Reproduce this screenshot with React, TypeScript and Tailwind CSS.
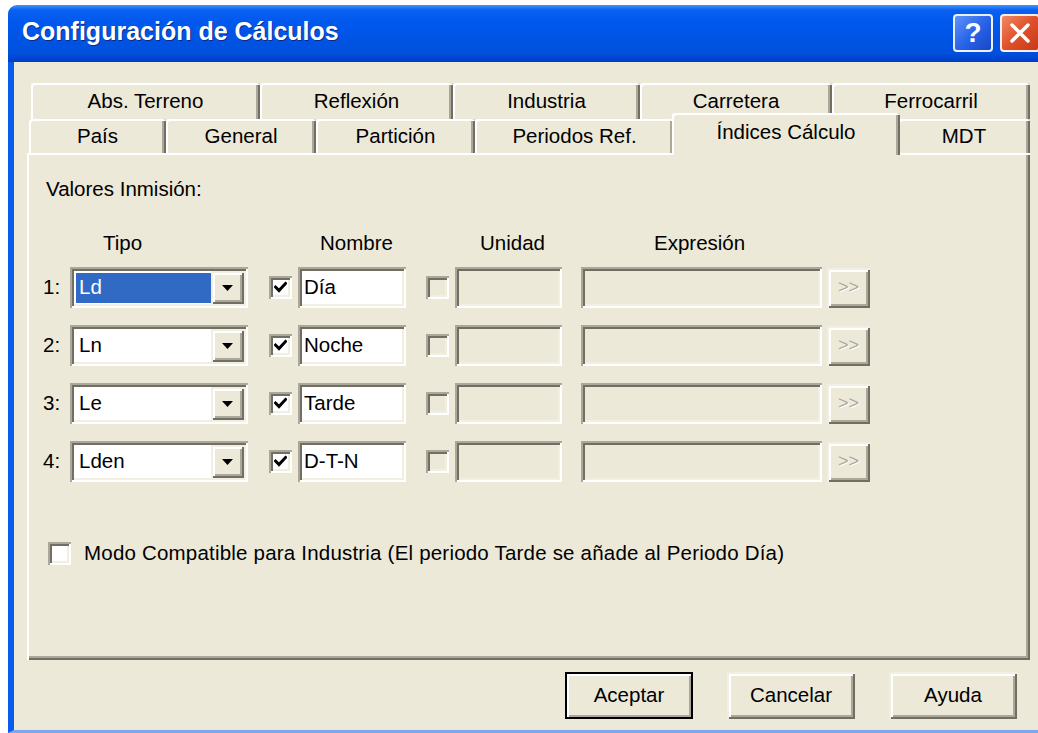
import React from "react";

const ui = "font-['Liberation_Sans',Arial,sans-serif]";

const sunken =
  "shadow-[inset_2px_2px_0_#ACA899,inset_-2px_-2px_0_#FFFFFF,inset_4px_4px_0_#716F64,inset_-4px_-4px_0_#F1EFE2]";
const raised =
  "shadow-[inset_2px_2px_0_#F1EFE2,inset_-2px_-2px_0_#716F64,inset_4px_4px_0_#FFFFFF,inset_-4px_-4px_0_#ACA899]";

const backTabs = [
  { label: "Abs. Terreno", w: "w-[229px]" },
  { label: "Reflexión", w: "w-[193px]" },
  { label: "Industria", w: "w-[187px]" },
  { label: "Carretera", w: "w-[192px]" },
  { label: "Ferrocarril", w: "w-[198px]" },
];

const frontTabs = [
  { label: "País", w: "w-[137px]" },
  { label: "General", w: "w-[150px]" },
  { label: "Partición", w: "w-[159px]" },
  { label: "Periodos Ref.", w: "w-[199px]" },
  { label: "Índices Cálculo", w: "w-[228px]", active: true },
  { label: "MDT", w: "w-[132px]" },
];

const rows = [
  { n: "1:", tipo: "Ld", nombre: "Día", focus: true },
  { n: "2:", tipo: "Ln", nombre: "Noche" },
  { n: "3:", tipo: "Le", nombre: "Tarde" },
  { n: "4:", tipo: "Lden", nombre: "D-T-N" },
];

const tabEdge =
  "shadow-[inset_2px_2px_0_#FFFFFF,inset_-2px_0_0_#716F64,inset_-4px_0_0_#ACA899]";

function Tab({ label, w, active }: { label: string; w: string; active?: boolean }) {
  if (active) {
    return (
      <div
        className={`relative z-10 -mx-[2px] -mb-[2px] flex h-[42px] ${w} items-center justify-center rounded-t-[3px] bg-[#ECE9D8] pb-[4px] ${tabEdge}`}
      >
        {label}
      </div>
    );
  }
  return (
    <div className={`flex h-full ${w} items-center justify-center rounded-t-[3px] bg-[#ECE9D8] ${tabEdge}`}>
      {label}
    </div>
  );
}

function CheckBox({ checked, disabled }: { checked?: boolean; disabled?: boolean }) {
  return (
    <div
      className={`flex h-[23px] w-[23px] shrink-0 items-center justify-center ${sunken} ${disabled ? "bg-[#ECE9D8]" : "bg-white"}`}
    >
      {checked && (
        <svg width="13" height="13" viewBox="0 0 13 13">
          <polyline points="1.5,6 5,9.5 11.5,2.5" fill="none" stroke="#000" strokeWidth="3" strokeLinecap="square" />
        </svg>
      )}
    </div>
  );
}

function Combo({ value, focus }: { value: string; focus?: boolean }) {
  return (
    <div className={`flex h-[41px] w-[178px] shrink-0 bg-white p-[4px] ${sunken}`}>
      <div className="flex flex-1 items-center pl-[2px]">
        <span
          className={`flex h-[30px] w-full items-center pl-[3px] ${focus ? "bg-[#316AC5] text-white" : "text-black"}`}
        >
          {value}
        </span>
      </div>
      <div className={`flex w-[33px] items-center justify-center bg-[#ECE9D8] ${raised}`}>
        <svg width="11" height="6" viewBox="0 0 11 6">
          <polygon points="0,0 11,0 5.5,6" fill="#000" />
        </svg>
      </div>
    </div>
  );
}

function Button({ label, primary }: { label: string; primary?: boolean }) {
  return (
    <div
      className={`flex h-[47px] w-[128px] items-center justify-center bg-[#ECE9D8] ${raised} ${primary ? "outline-2 -outline-offset-2 outline-black" : ""}`}
    >
      {label}
    </div>
  );
}

export default function App() {
  return (
    <div className={`h-[733px] w-[1038px] overflow-hidden bg-white pl-[8px] pt-[5px] text-[20.5px] text-black ${ui}`}>
      <div className="flex h-[728px] w-[1040px] flex-col overflow-hidden rounded-tl-[9px] rounded-tr-[9px]">
        {/* title bar */}
        <div className="flex h-[57px] shrink-0 items-center bg-[linear-gradient(to_bottom,#3D95FF_0%,#0A60EE_9%,#0058EE_30%,#0054E3_60%,#0050DD_85%,#003DC8_100%)] pl-[14px] pr-[8px]">
          <span className="pb-[3px] text-[25px] font-bold text-white [text-shadow:1px_1px_0_#0B2A8A]">
            Configuración de Cálculos
          </span>
          <div className="ml-auto flex gap-[7px] pb-[2px]">
            <div className="flex h-[38px] w-[40px] items-center justify-center rounded-[4px] border-2 border-white/90 bg-[linear-gradient(135deg,#5F95F9_0%,#2A64E8_50%,#1846C8_100%)] text-[28px] font-bold text-white">
              ?
            </div>
            <div className="flex h-[38px] w-[40px] items-center justify-center rounded-[4px] border-2 border-white/90 bg-[linear-gradient(135deg,#EF8A66_0%,#E0502A_50%,#C53A16_100%)]">
              <svg width="22" height="22" viewBox="0 0 22 22">
                <path d="M3 3 L19 19 M19 3 L3 19" stroke="#fff" strokeWidth="3.5" strokeLinecap="round" />
              </svg>
            </div>
          </div>
        </div>

        {/* body */}
        <div className="flex flex-1 flex-col border-b-[3px] border-l-[6px] border-b-[#7FA6EE] border-l-[#0A5CEB] bg-[#ECE9D8] pt-[21px]">
          <div className="relative z-10 flex flex-col">
            <div className="ml-[17px] flex h-[36px]">
              {backTabs.map((t) => (
                <Tab key={t.label} label={t.label} w={t.w} />
              ))}
            </div>
            <div className="ml-[15px] flex h-[34px] items-end">
              {frontTabs.map((t) => (
                <Tab key={t.label} label={t.label} w={t.w} active={t.active} />
              ))}
            </div>
          </div>

          {/* tab page */}
          <div className="ml-[13px] flex h-[507px] w-[1003px] flex-col shadow-[inset_2px_2px_0_#FFFFFF,inset_-2px_-2px_0_#716F64,inset_-4px_-4px_0_#ACA899]">
            <div className="ml-[19px] mt-[24px] leading-[24px]">Valores Inmisión:</div>

            <div className="mt-[30px] flex leading-[24px]">
              <span className="ml-[76px] w-[217px]">Tipo</span>
              <span className="w-[160px]">Nombre</span>
              <span className="w-[174px]">Unidad</span>
              <span>Expresión</span>
            </div>

            <div className="mt-[12px] flex flex-col gap-[17px]">
              {rows.map((r) => (
                <div key={r.n} className="flex h-[41px] items-center pl-[16px]">
                  <span className="w-[27px]">{r.n}</span>
                  <Combo value={r.tipo} focus={r.focus} />
                  <div className="ml-[21px]">
                    <CheckBox checked />
                  </div>
                  <div className={`ml-[6px] flex h-[41px] w-[108px] items-center bg-white pl-[6px] ${sunken}`}>
                    {r.nombre}
                  </div>
                  <div className="ml-[20px]">
                    <CheckBox disabled />
                  </div>
                  <div className={`ml-[6px] h-[41px] w-[107px] ${sunken}`} />
                  <div className={`ml-[19px] h-[41px] w-[241px] ${sunken}`} />
                  <div
                    className={`ml-[5px] flex h-[40px] w-[43px] items-center justify-center text-[18px] text-[#ACA899] [text-shadow:1px_1px_0_#fff] ${raised}`}
                  >
                    &gt;&gt;
                  </div>
                </div>
              ))}
            </div>

            <div className="ml-[21px] mt-[56px] flex items-center">
              <CheckBox />
              <span className="ml-[13px] tracking-[0.2px]">
                Modo Compatible para Industria (El periodo Tarde se añade al Periodo Día)
              </span>
            </div>
          </div>

          {/* dialog buttons */}
          <div className="mt-[12px] flex gap-[34px] pl-[551px]">
            <Button label="Aceptar" primary />
            <Button label="Cancelar" />
            <Button label="Ayuda" />
          </div>
        </div>
      </div>
    </div>
  );
}
